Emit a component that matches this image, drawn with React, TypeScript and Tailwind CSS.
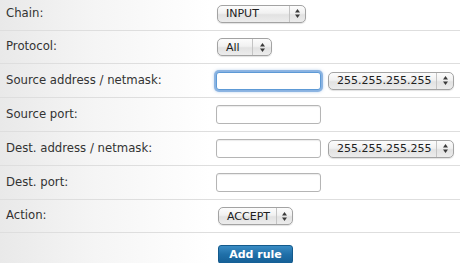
import React from "react";

const labelFont = { fontFamily: '"DejaVu Sans", Verdana, sans-serif' };

function Arrows() {
  return (
    <svg width="7" height="11" viewBox="0 0 7 11" className="block">
      <path d="M3.5 1 L6 4.5 L1 4.5 Z" fill="#3a3a3a" />
      <path d="M3.5 10 L6 6.5 L1 6.5 Z" fill="#3a3a3a" />
    </svg>
  );
}

function Select({ text, w, arrow = 16 }: { text: string; w: string; arrow?: number }) {
  return (
    <div
      className={`${w} h-[18px] flex items-stretch rounded-[5px] border border-[#a3a3a3] bg-[linear-gradient(#fcfcfc,#f1f1f1_45%,#e2e2e2_55%,#ececec)] shadow-[0_1px_1px_rgba(0,0,0,0.12)] text-[11px] text-[#202020] leading-none`}
      style={labelFont}
    >
      <div className="flex-1 flex items-center pl-[8px] whitespace-nowrap">{text}</div>
      <div
        className="flex items-center justify-center border-l border-[#c4c4c4]"
        style={{ width: arrow }}
      >
        <Arrows />
      </div>
    </div>
  );
}

function TextInput({ focus = false }: { focus?: boolean }) {
  return focus ? (
    <div className="w-[105px] h-[18px] rounded-[3px] bg-white border border-[#5d9ad6] shadow-[0_0_0_2px_rgba(118,166,220,0.75),0_0_3px_2px_rgba(118,166,220,0.5)]" />
  ) : (
    <div className="w-[105px] h-[19px] rounded-[3px] bg-white border border-[#b5b5b5] shadow-[inset_0_1px_1px_rgba(0,0,0,0.08)]" />
  );
}

function Row({ label, h, children, top = "" }: { label: string; h: string; children: React.ReactNode; top?: string }) {
  return (
    <div className={`flex ${h} ${top} border-b border-[#dedede]`}>
      <div
        className="w-[210px] shrink-0 flex items-center pl-[6px] text-[11.7px] text-[#333333] bg-[linear-gradient(90deg,#e9e9e9,#f5f5f5_45%,#ffffff)]"
        style={labelFont}
      >
        {label}
      </div>
      <div className="flex-1 flex items-center gap-[7px] pl-[6px] bg-white">{children}</div>
    </div>
  );
}

export default function App() {
  return (
    <div className="w-[460px] h-[263px] overflow-hidden bg-white">
      <div className="-mt-[3px]">
        <Row label="Chain:" h="h-[34px]">
          <div className="pl-[1px]">
            <Select text="INPUT" w="w-[89px]" />
          </div>
        </Row>
        <Row label="Protocol:" h="h-[33px]">
          <div className="pl-[1px]">
            <Select text="All" w="w-[55px]" arrow={19} />
          </div>
        </Row>
        <Row label="Source address / netmask:" h="h-[34px]">
          <TextInput focus />
          <Select text="255.255.255.255" w="w-[126px]" arrow={17} />
        </Row>
        <Row label="Source port:" h="h-[34px]">
          <TextInput />
        </Row>
        <Row label="Dest. address / netmask:" h="h-[34px]">
          <TextInput />
          <Select text="255.255.255.255" w="w-[126px]" arrow={17} />
        </Row>
        <Row label="Dest. port:" h="h-[34px]">
          <TextInput />
        </Row>
        <Row label="Action:" h="h-[33px]">
          <div className="pl-[2px]">
            <Select text="ACCEPT" w="w-[75px]" />
          </div>
        </Row>
        <div className="flex h-[40px]">
          <div className="w-[210px] shrink-0 bg-[linear-gradient(90deg,#e9e9e9,#f5f5f5_45%,#ffffff)]" />
          <div className="flex-1 pl-[8px] pt-[7px] bg-white">
            <button
              className="w-[75px] h-[19px] rounded-[3px] border border-[#135a8c] bg-[linear-gradient(#3a8cc4,#1f6fa8_50%,#155f96)] text-white text-[11px] font-bold leading-none"
              style={labelFont}
            >
              Add rule
            </button>
          </div>
        </div>
      </div>
    </div>
  );
}
